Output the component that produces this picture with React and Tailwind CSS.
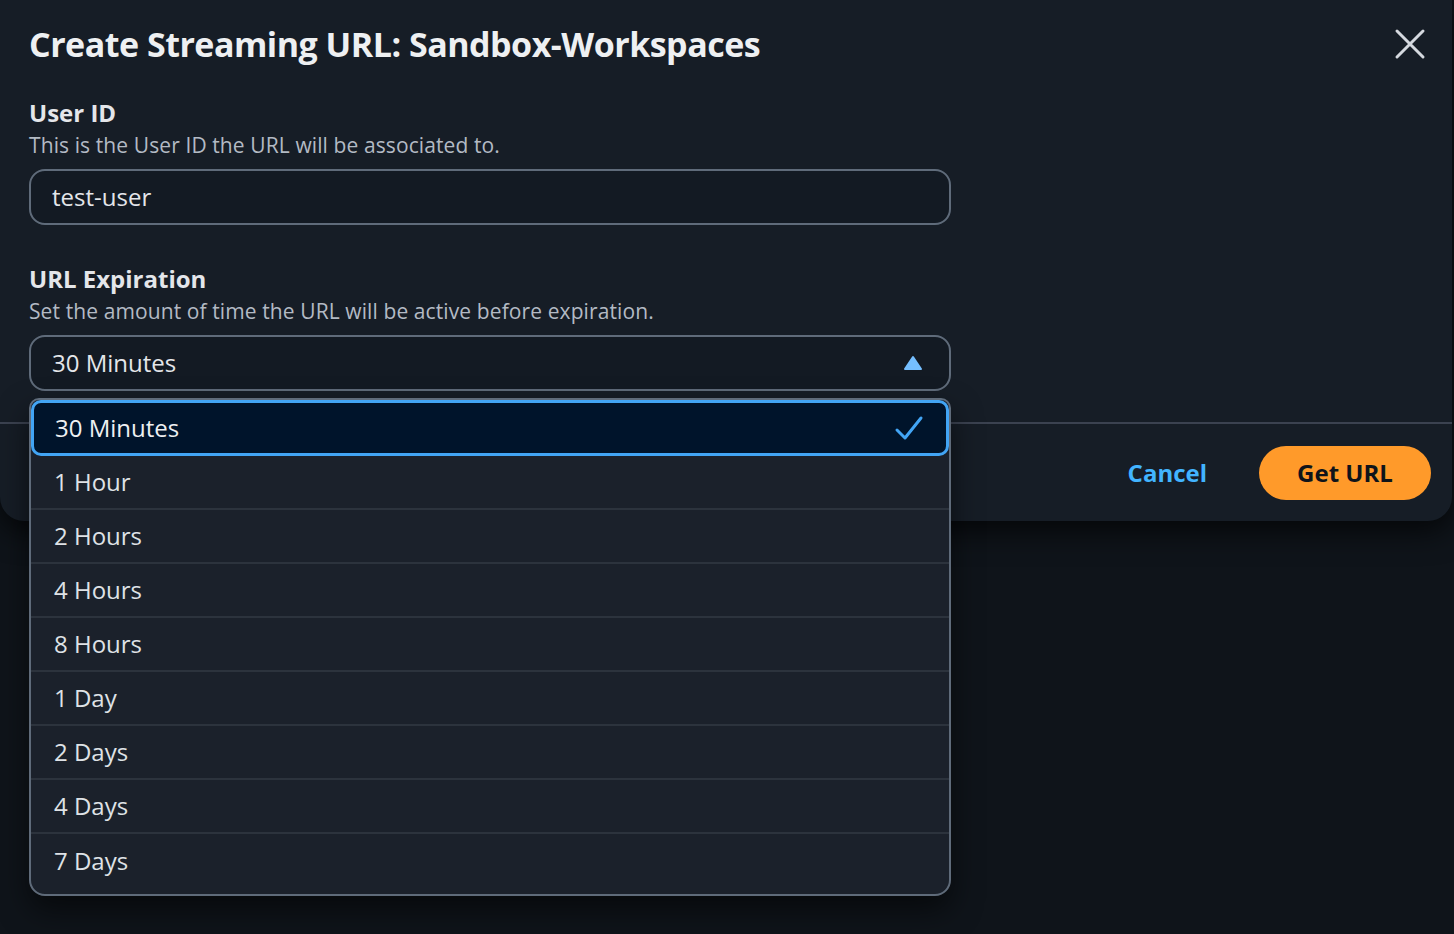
import React from "react";

const OPTIONS = ["30 Minutes", "1 Hour", "2 Hours", "4 Hours", "8 Hours", "1 Day", "2 Days", "4 Days", "7 Days"];

function CloseIcon() {
  return (
    <svg width="32" height="32" viewBox="0 0 32 32" fill="none" stroke="#d5d9df" strokeWidth="3" strokeLinecap="round">
      <path d="M3 3 L29 29 M29 3 L3 29" />
    </svg>
  );
}

function CaretUp() {
  return (
    <svg width="20" height="16" viewBox="0 0 20 16">
      <path d="M10 2 L18 14 L2 14 Z" fill="#75bfff" stroke="#75bfff" strokeWidth="2" strokeLinejoin="round" />
    </svg>
  );
}

function Check() {
  return (
    <svg width="30" height="26" viewBox="0 0 30 26" fill="none" stroke="#42a5f5" strokeWidth="3" strokeLinecap="round" strokeLinejoin="round">
      <path d="M3 15 L11 23 L27 3" />
    </svg>
  );
}

export default function App() {
  return (
    <div
      className="relative h-[934px] w-full overflow-hidden bg-[#0f141a] text-[#d1d5db]"
      style={{ fontFamily: '"Open Sans", "Noto Sans", sans-serif' }}
    >
      {/* modal */}
      <div className="flex h-[521px] w-[1452px] flex-col rounded-br-[24px] rounded-bl-[24px] bg-[#161d26] shadow-[0_10px_30px_rgba(0,0,0,0.7)]">
        <div className="flex h-[88px] items-center justify-between pl-[29px] pr-[26px]">
          <h1 className="text-[34px] font-bold tracking-[-0.5px] text-[#eef0f2]">Create Streaming URL: Sandbox-Workspaces</h1>
          <CloseIcon />
        </div>

        <div className="flex flex-col px-[29px] pt-[10px]">
          <label className="text-[24px] font-bold leading-[30px] text-[#e4e6ea]">User ID</label>
          <p className="text-[21px] leading-[34px] tracking-[0.1px] text-[#b3bac4]">This is the User ID the URL will be associated to.</p>
          <div className="mt-[7px] flex h-[56px] w-[922px] items-center rounded-[16px] border-2 border-[#5f6b7a] bg-[#131a23] pl-[21px]">
            <span className="text-[24px] text-[#e4e6ea]">test-user</span>
          </div>

          <label className="mt-[39px] text-[24px] font-bold leading-[30px] text-[#e4e6ea]">URL Expiration</label>
          <p className="text-[21px] leading-[34px] tracking-[0.1px] text-[#b3bac4]">Set the amount of time the URL will be active before expiration.</p>
          <div className="mt-[7px] flex h-[56px] w-[922px] items-center justify-between rounded-[16px] border-2 border-[#5f6b7a] bg-[#131a23] pl-[21px] pr-[26px]">
            <span className="text-[24px] text-[#e4e6ea]">30 Minutes</span>
            <CaretUp />
          </div>
        </div>

        <div className="mt-auto flex h-[99px] items-center justify-end gap-[52px] border-t-2 border-[#3b4250] pr-[21px]">
          <span className="text-[24px] font-bold text-[#42b4ff]">Cancel</span>
          <button className="h-[54px] w-[172px] rounded-full bg-[#ff9a2a] text-[24px] font-bold text-[#0f141a]">Get URL</button>
        </div>
      </div>

      {/* open dropdown list */}
      <div className="absolute left-[29px] top-[398px] w-[922px] overflow-hidden rounded-b-[16px] rounded-t-[10px] border-2 border-[#5f6b7a] bg-[#1b212b] pb-[6px] shadow-[0_14px_30px_rgba(0,0,0,0.55)]">
        {OPTIONS.map((opt, i) =>
          i === 0 ? (
            <div
              key={opt}
              className="flex h-[56px] items-center justify-between rounded-[10px] border-[3px] border-[#42a5f5] bg-[#00142b] pl-[21px] pr-[22px]"
            >
              <span className="text-[24px] text-[#eef0f2]">{opt}</span>
              <Check />
            </div>
          ) : (
            <div key={opt} className={`flex h-[54px] items-center pl-[23px] ${i < OPTIONS.length - 1 ? "border-b-2 border-[#2c333d]" : ""}`}>
              <span className="text-[24px] text-[#dfe2e6]">{opt}</span>
            </div>
          )
        )}
      </div>
    </div>
  );
}
